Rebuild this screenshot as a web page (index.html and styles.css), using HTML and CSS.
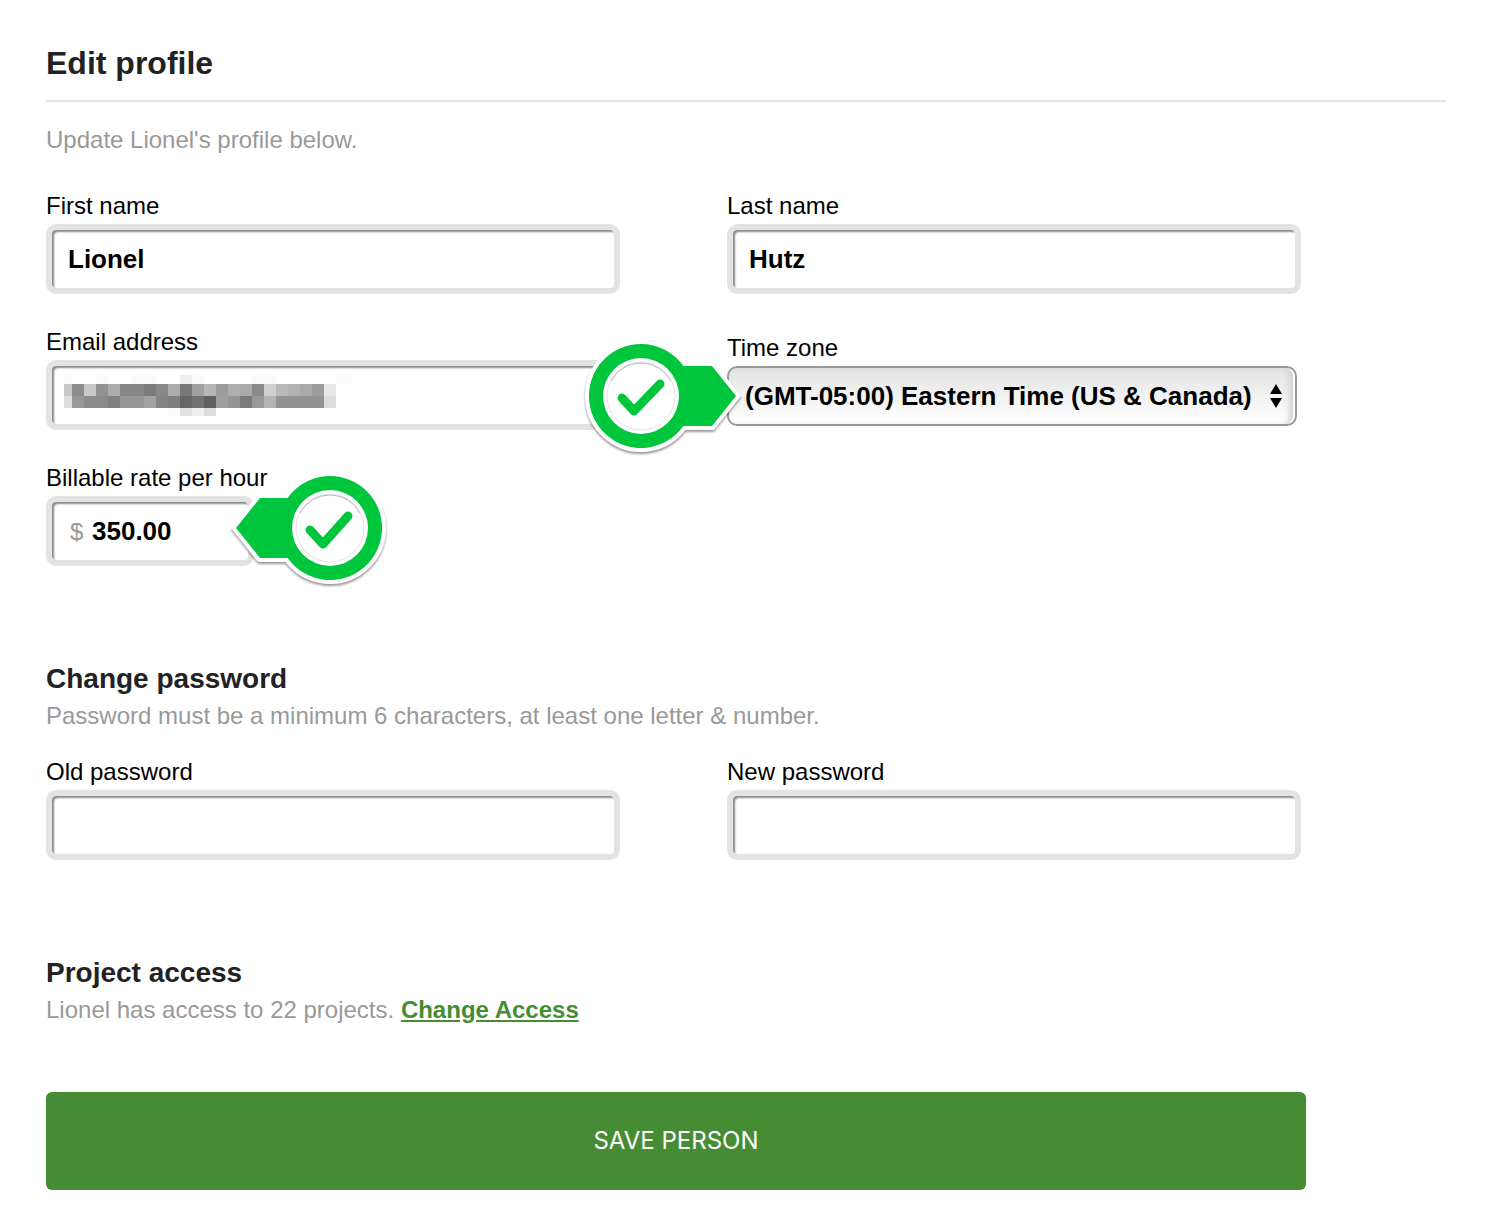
FILE: index.html
```html
<!DOCTYPE html>
<html lang="en">
<head>
<meta charset="utf-8">
<meta name="viewport" content="width=device-width, initial-scale=1">
<title>Edit profile</title>
<link rel="stylesheet" href="styles.css">
</head>
<body>
<main class="page">
  <h1 class="page-title">Edit profile</h1>
  <p class="note intro">Update Lionel's profile below.</p>

  <form class="form">
    <section class="fields">
      <div class="field">
        <label for="first-name">First name</label>
        <input class="text-input" id="first-name" type="text" value="Lionel">
      </div>
      <div class="field">
        <label for="last-name">Last name</label>
        <input class="text-input" id="last-name" type="text" value="Hutz">
      </div>
      <div class="field">
        <label for="email">Email address</label>
        <div class="control">
          <input class="text-input" id="email" type="email">
          <!-- pixelated cover over the private address -->
          <svg class="redaction" viewBox="0 0 290 41" shape-rendering="crispEdges" aria-hidden="true">
            <g fill="#fafafa"><path d="M0 0h8v9H0zM32 0h12v9H32zM68 0h24v9H68zM128 0h12v9h-12zM188 0h24v9h-24zM272 0h16v9h-16zM104 33h12v8h-12z"/></g>
            <g fill="#eee"><path d="M116 0h12v9h-12zM128 33h12v8h-12z"/></g>
            <path fill="#e2e2e2" d="M116 33h12v8h-12z"/><path fill="#dcdcdc" d="M140 33h12v8h-12z"/>
            <path fill="#c8c8c8" d="M0 9h8v12H0z"/><path fill="#8c8c8c" d="M8 9h12v12H8z"/><path fill="#c8c8c8" d="M20 9h12v12H20z"/><path fill="#929292" d="M32 9h12v12H32z"/><path fill="#acacac" d="M44 9h12v12H44z"/><path fill="#878787" d="M56 9h24v12H56z"/><path fill="#7a7a7a" d="M80 9h12v12H80z"/><path fill="#888" d="M92 9h12v12H92z"/><path fill="#acacac" d="M104 9h12v12h-12z"/><path fill="#787878" d="M116 9h12v12h-12z"/><path fill="#a0a0a0" d="M128 9h12v12h-12z"/><path fill="#b6b6b6" d="M140 9h12v12h-12z"/><path fill="#9c9c9c" d="M152 9h12v12h-12z"/><path fill="#aeaeae" d="M164 9h12v12h-12z"/><path fill="#aaa" d="M176 9h12v12h-12z"/><path fill="#8a8a8a" d="M188 9h12v12h-12z"/><path fill="#d0d0d0" d="M200 9h12v12h-12z"/><path fill="#bababa" d="M212 9h12v12h-12z"/><path fill="#b2b2b2" d="M224 9h12v12h-12z"/><path fill="#aaa" d="M236 9h12v12h-12z"/><path fill="#9c9c9c" d="M248 9h12v12h-12z"/><path fill="#e8e8e8" d="M260 9h12v12h-12z"/>
            <path fill="#dcdcdc" d="M0 21h8v12H0z"/><path fill="#989898" d="M8 21h12v12H8z"/><path fill="#8b8b8b" d="M20 21h24v12H20z"/><path fill="#808080" d="M44 21h12v12H44z"/><path fill="#969696" d="M56 21h24v12H56z"/><path fill="#a2a2a2" d="M80 21h12v12H80z"/><path fill="#848484" d="M92 21h12v12H92z"/><path fill="#7e7e7e" d="M104 21h12v12h-12z"/><path fill="#666" d="M116 21h12v12h-12z"/><path fill="#727272" d="M128 21h12v12h-12z"/><path fill="#606060" d="M140 21h12v12h-12z"/><path fill="#9e9e9e" d="M152 21h12v12h-12z"/><path fill="#949494" d="M164 21h12v12h-12z"/><path fill="#7a7a7a" d="M176 21h12v12h-12z"/><path fill="#989898" d="M188 21h12v12h-12z"/><path fill="#b4b4b4" d="M200 21h12v12h-12z"/><path fill="#929292" d="M212 21h48v12h-48z"/><path fill="#dcdcdc" d="M260 21h12v12h-12z"/>
          </svg>
        </div>
      </div>
      <div class="field field-select">
        <label for="time-zone">Time zone</label>
        <div class="control select-control">
          <select class="select-input" id="time-zone">
            <option>(GMT-05:00) Eastern Time (US &amp; Canada)</option>
          </select>
          <svg class="select-arrows" viewBox="0 0 12 24" aria-hidden="true"><path d="M6 0l6 10H0zM6 24l6-10H0z"/></svg>
          <svg class="callout callout-right" viewBox="0 0 166 124" aria-hidden="true">
            <path class="callout-shape" d="M102.400 30H131l24 30-24 30h-28.600A52 52 0 1 1 102.400 30z"/>
            <circle class="callout-disc" cx="60" cy="60" r="38"/>
            <circle class="callout-ring" cx="60" cy="60" r="34"/>
            <path class="callout-rim" d="M30 45a34 34 0 0 1 60 0"/>
            <path class="callout-check" d="M41 62l12 13 26-27"/>
          </svg>
        </div>
      </div>
      <div class="field">
        <label for="rate">Billable rate per hour</label>
        <div class="control rate-control">
          <span class="currency" aria-hidden="true">$</span>
          <input class="text-input rate-input" id="rate" type="text" value="350.00">
          <svg class="callout callout-left" viewBox="0 0 166 124" aria-hidden="true">
            <path class="callout-shape" d="M61.600 30H34L10 60l24 30h27.600A52 52 0 1 0 61.600 30z"/>
            <circle class="callout-disc" cx="104" cy="60" r="38"/>
            <circle class="callout-ring" cx="104" cy="60" r="34"/>
            <path class="callout-rim" d="M74 45a34 34 0 0 1 60 0"/>
            <path class="callout-check" d="M84 62l13 14 25-28"/>
          </svg>
        </div>
      </div>
    </section>

    <section class="section">
      <h2 class="section-title">Change password</h2>
      <p class="note">Password must be a minimum 6 characters, at least one letter &amp; number.</p>
      <div class="fields section-fields">
        <div class="field">
          <label for="old-password">Old password</label>
          <input class="text-input" id="old-password" type="password">
        </div>
        <div class="field">
          <label for="new-password">New password</label>
          <input class="text-input" id="new-password" type="password">
        </div>
      </div>
    </section>

    <section class="section">
      <h2 class="section-title">Project access</h2>
      <p class="note">Lionel has access to 22 projects. <a class="link" href="#access">Change Access</a></p>
    </section>

    <button class="save" type="submit">SAVE PERSON</button>
  </form>
</main>
</body>
</html>
```

FILE: styles.css
```css
* {
  box-sizing: border-box;
}

body {
  margin: 0;
  background: #fff;
  color: #000;
  font: 24px/28px "Liberation Sans", Arial, sans-serif;
}

h1, h2, p {
  margin: 0;
}

.page {
  padding: 43px 42px 34px 46px;
}

.page-title {
  padding-bottom: 17px;
  border-bottom: 2px solid #e4e4e4;
  color: #222;
  font-size: 32px;
  line-height: 40px;
}

.note {
  color: #999;
}

.intro {
  margin: 24px 0 38px;
}

.form {
  width: 90%;
}

.fields {
  display: grid;
  grid-template-columns: 1fr 1fr;
  gap: 34px 107px;
  padding-right: 5px;
}

.field label {
  display: block;
  margin-bottom: 4px;
}

.field-select {
  padding: 6px 4px 0 0;
}

.control {
  position: relative;
}

.text-input {
  display: block;
  width: 100%;
  height: 70px;
  padding: 0 16px;
  border: 6px solid #e3e3e3;
  border-radius: 10px;
  background: #fff;
  box-shadow: inset 2px 2px 2px #888;
  color: #000;
  font: bold 26px/30px "Liberation Sans", Arial, sans-serif;
}

.redaction {
  position: absolute;
  top: 15px;
  left: 18px;
  width: 290px;
  height: 41px;
}

.select-input {
  display: block;
  width: 100%;
  height: 60px;
  padding: 0 40px 0 16px;
  appearance: none;
  border: 2px solid #999;
  border-radius: 10px;
  background: linear-gradient(#e3e3e3, #fff);
  box-shadow: inset -2px 0 0 #fff, inset -8px 0 6px -3px #ccc;
  color: #000;
  font: bold 26px/30px "Liberation Sans", Arial, sans-serif;
}

.select-arrows {
  position: absolute;
  top: 18px;
  right: 15px;
  width: 12px;
  height: 24px;
  pointer-events: none;
}

.rate-control {
  width: 208px;
}

.rate-input {
  padding-left: 40px;
}

.currency {
  position: absolute;
  top: 22px;
  left: 24px;
  color: #999;
}

.callout {
  position: absolute;
  width: 166px;
  height: 124px;
  overflow: visible;
  pointer-events: none;
  filter: drop-shadow(0 2px 1px rgba(0, 0, 0, 0.4));
}

.callout-right {
  top: -30px;
  left: -146px;
}

.callout-left {
  top: -28px;
  left: 180px;
}

.callout-shape {
  fill: #00c63e;
  stroke: #fff;
  stroke-width: 8px;
  paint-order: stroke;
}

.callout-disc {
  fill: #fff;
}

.callout-ring {
  fill: none;
  stroke: #e2e2e2;
  stroke-width: 1px;
}

.callout-rim {
  fill: none;
  stroke: #bbb;
  stroke-width: 1px;
}

.callout-check {
  fill: none;
  stroke: #00c63e;
  stroke-width: 9px;
  stroke-linecap: round;
  stroke-linejoin: round;
}

.section {
  margin-top: 96px;
}

.section-title {
  margin-bottom: 6px;
  color: #222;
  font-size: 28px;
  line-height: 34px;
}

.section-fields {
  margin-top: 28px;
}

.link {
  color: #468c34;
  font-weight: bold;
}

.save {
  display: block;
  width: 100%;
  height: 98px;
  margin-top: 68px;
  border: 0;
  border-radius: 6px;
  background: #468c34;
  color: #fff;
  font: 24px/28px Inter, sans-serif;
}
```
